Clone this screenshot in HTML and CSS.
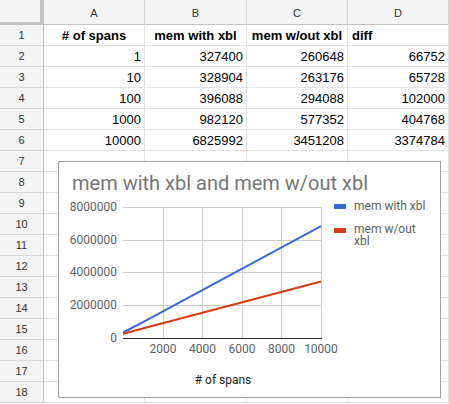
FILE: index.html
```html
<!DOCTYPE html>
<html>
<head>
<meta charset="utf-8">
<link rel="stylesheet" href="styles.css">
</head>
<body>
<div class="sheet">
  <div class="corner"></div><div class="colh">A</div><div class="colh">B</div><div class="colh">C</div><div class="colh">D</div>
  <div class="rowh">1</div><div class="c b ctr">#&nbsp;of spans</div><div class="c b ctr">mem with xbl</div><div class="c b ctr">mem w/out xbl</div><div class="c b">diff</div>
  <div class="rowh">2</div><div class="c n">1</div><div class="c n">327400</div><div class="c n">260648</div><div class="c n">66752</div>
  <div class="rowh">3</div><div class="c n">10</div><div class="c n">328904</div><div class="c n">263176</div><div class="c n">65728</div>
  <div class="rowh">4</div><div class="c n">100</div><div class="c n">396088</div><div class="c n">294088</div><div class="c n">102000</div>
  <div class="rowh">5</div><div class="c n">1000</div><div class="c n">982120</div><div class="c n">577352</div><div class="c n">404768</div>
  <div class="rowh">6</div><div class="c n">10000</div><div class="c n">6825992</div><div class="c n">3451208</div><div class="c n">3374784</div>
  <div class="rowh">7</div><div class="c"></div><div class="c"></div><div class="c"></div><div class="c"></div>
  <div class="rowh">8</div><div class="c"></div><div class="c"></div><div class="c"></div><div class="c"></div>
  <div class="rowh">9</div><div class="c"></div><div class="c"></div><div class="c"></div><div class="c"></div>
  <div class="rowh">10</div><div class="c"></div><div class="c"></div><div class="c"></div><div class="c"></div>
  <div class="rowh">11</div><div class="c"></div><div class="c"></div><div class="c"></div><div class="c"></div>
  <div class="rowh">12</div><div class="c"></div><div class="c"></div><div class="c"></div><div class="c"></div>
  <div class="rowh">13</div><div class="c"></div><div class="c"></div><div class="c"></div><div class="c"></div>
  <div class="rowh">14</div><div class="c"></div><div class="c"></div><div class="c"></div><div class="c"></div>
  <div class="rowh">15</div><div class="c"></div><div class="c"></div><div class="c"></div><div class="c"></div>
  <div class="rowh">16</div><div class="c"></div><div class="c"></div><div class="c"></div><div class="c"></div>
  <div class="rowh">17</div><div class="c"></div><div class="c"></div><div class="c"></div><div class="c"></div>
  <div class="rowh">18</div><div class="c"></div><div class="c"></div><div class="c"></div><div class="c"></div>
</div>

<div class="chart">
  <svg class="plot" width="381" height="235" viewBox="0 0 381 235">
    <text class="title" x="13" y="28">mem with xbl and mem w/out xbl</text>
    <g class="grid">
      <line x1="64" y1="45.5" x2="262" y2="45.5"/>
      <line x1="64" y1="78.5" x2="262" y2="78.5"/>
      <line x1="64" y1="110.5" x2="262" y2="110.5"/>
      <line x1="64" y1="143.5" x2="262" y2="143.5"/>
      <line x1="104.5" y1="45" x2="104.5" y2="176"/>
      <line x1="143.5" y1="45" x2="143.5" y2="176"/>
      <line x1="183.5" y1="45" x2="183.5" y2="176"/>
      <line x1="222.5" y1="45" x2="222.5" y2="176"/>
      <line x1="262.5" y1="45" x2="262.5" y2="176"/>
    </g>
    <line class="axis" x1="64" y1="176.5" x2="263" y2="176.5"/>
    <g class="ylab">
      <text x="58" y="49">8000000</text>
      <text x="58" y="82">6000000</text>
      <text x="58" y="114">4000000</text>
      <text x="58" y="147">2000000</text>
      <text x="58" y="180">0</text>
    </g>
    <g class="xlab">
      <text x="104" y="191">2000</text>
      <text x="143.5" y="191">4000</text>
      <text x="183" y="191">6000</text>
      <text x="222.5" y="191">8000</text>
      <text x="262" y="191">10000</text>
    </g>
    <text class="xtitle" x="164" y="222"># of spans</text>
    <polyline class="s1" points="64,170.6 64.2,170.6 66,169.5 83.6,160.4 262,64.2"/>
    <polyline class="s2" points="64,171.7 64.2,171.7 66,171.2 83.6,166.5 262,119.5"/>
    <rect x="275" y="42" width="12" height="5" fill="#3669d7"/>
    <rect x="275" y="66" width="12" height="5" fill="#dc3912"/>
    <g class="leg">
      <text x="295" y="48">mem with xbl</text>
      <text x="295" y="71">mem w/out</text>
      <text class="leg2" x="295" y="83">xbl</text>
    </g>
  </svg>
</div>
</body>
</html>
```

FILE: styles.css
```css
html, body {
  margin: 0;
  padding: 0;
  background: #ffffff;
}
body {
  position: relative;
  width: 449px;
  height: 404px;
  overflow: hidden;
  font-family: "Liberation Sans", Arial, sans-serif;
}
.sheet {
  display: grid;
  grid-template-columns: 44px 101px 102px 101px 101px;
  grid-template-rows: 25px repeat(18, 21px);
}
.sheet > div {
  box-sizing: border-box;
}
.corner {
  background: #f3f3f3;
  border-right: 4px solid #c2c2c2;
  border-bottom: 3px solid #c2c2c2;
}
.colh {
  background: #f3f3f3;
  border-right: 1px solid #d4d4d4;
  border-bottom: 1px solid #c4c4c4;
  font-size: 11px;
  color: #333;
  display: flex;
  align-items: center;
  justify-content: center;
  padding-top: 2px;
}
.rowh {
  background: #f3f3f3;
  border-right: 1px solid #c4c4c4;
  border-bottom: 1px solid #d8d8d8;
  font-size: 11px;
  color: #333;
  display: flex;
  align-items: center;
  justify-content: center;
}
.c {
  border-right: 1px solid #e2e2e2;
  border-bottom: 1px solid #e2e2e2;
  font-size: 13px;
  color: #000;
  display: flex;
  align-items: center;
  padding: 0 3px 0 4px;
  white-space: nowrap;
}
.b {
  font-weight: bold;
}
.ctr {
  justify-content: center;
  padding: 0;
}
.n {
  justify-content: flex-end;
}
.chart {
  position: absolute;
  left: 58px;
  top: 161px;
  width: 383px;
  height: 237px;
  box-sizing: border-box;
  border: 1px solid #9e9e9e;
  background: #ffffff;
}
.plot {
  display: block;
  font-family: Roboto, "Liberation Sans", sans-serif;
}
.title {
  font-size: 20px;
  fill: #757575;
}
.grid line {
  stroke: #cccccc;
  stroke-width: 1;
}
.axis {
  stroke: #333333;
  stroke-width: 1;
}
.ylab text {
  font-size: 12px;
  fill: #616161;
  text-anchor: end;
}
.xlab text {
  font-size: 12px;
  fill: #616161;
  text-anchor: middle;
}
.xtitle {
  font-size: 12px;
  fill: #222222;
  text-anchor: middle;
}
.s1, .s2 {
  fill: none;
  stroke-width: 2;
  stroke-linejoin: round;
}
.s1 {
  stroke: #3669d7;
}
.s2 {
  stroke: #dc3912;
}
.leg text {
  font-size: 12px;
  fill: #616161;
}
```
